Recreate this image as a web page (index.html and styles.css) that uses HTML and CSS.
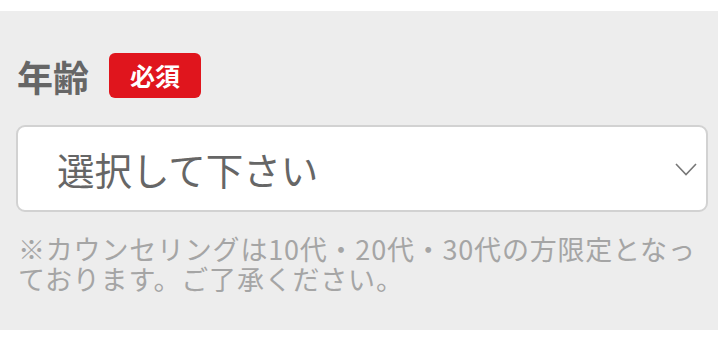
FILE: index.html
```html
<!DOCTYPE html>
<html lang="ja">
<head>
<meta charset="utf-8">
<link rel="stylesheet" href="styles.css">
</head>
<body>
<div class="top-strip"></div>
<section class="field">
  <div class="label-row">
    <span class="label">年齢</span>
    <span class="badge">必須</span>
  </div>
  <div class="select">
    <span class="select-text">選択して下さい</span>
    <svg class="chevron" width="22" height="13" viewBox="0 0 22 13"><path d="M1 1 L11 11.5 L21 1" fill="none" stroke="#777" stroke-width="1.6"/></svg>
  </div>
  <p class="note">※カウンセリングは10代・20代・30代の方限定となっております。ご了承ください。</p>
</section>
</body>
</html>
```

FILE: styles.css
```css
html, body {
  margin: 0;
  padding: 0;
  background: #ffffff;
  font-family: "Noto Sans CJK JP", "Noto Sans", sans-serif;
}
.top-strip {
  height: 11px;
  background: #ffffff;
}
.field {
  background: #ededed;
  height: 319px;
  box-sizing: border-box;
  padding: 42px 10px 0 16px;
}
.label-row {
  display: flex;
  align-items: center;
  gap: 20px;
  height: 45px;
}
.label {
  font-size: 36px;
  font-weight: 700;
  color: #666666;
  line-height: 1;
  padding-left: 1px;
}
.badge {
  display: inline-flex;
  align-items: center;
  justify-content: center;
  width: 92px;
  height: 45px;
  background: #e0151d;
  color: #ffffff;
  font-size: 25px;
  font-weight: 700;
  border-radius: 6px;
  line-height: 1;
}
.select {
  margin-top: 27px;
  height: 87px;
  width: 692px;
  box-sizing: border-box;
  background: #ffffff;
  border: 2px solid #d2d2d2;
  border-radius: 9px;
  display: flex;
  align-items: center;
  justify-content: space-between;
  padding: 0 9px 0 39px;
}
.select-text {
  font-size: 37.5px;
  color: #666666;
  line-height: 1;
}
.chevron {
  display: block;
  margin-top: 2px;
}
.note {
  margin: 22px 0 0 2px;
  font-size: 27px;
  line-height: 30px;
  letter-spacing: 0.8px;
  color: #a5a5a5;
  width: 686px;
  line-break: normal;
  word-break: break-all;
}
```
